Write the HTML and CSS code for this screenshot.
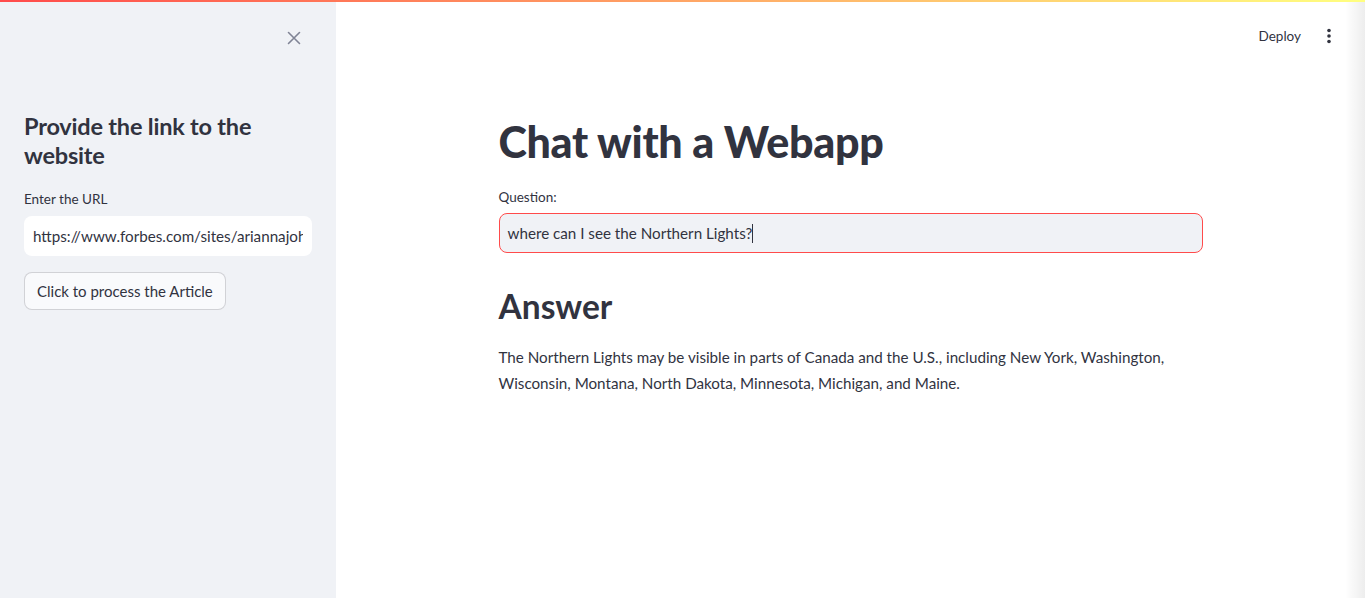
FILE: index.html
```html
<!DOCTYPE html>
<html lang="en">
<head>
<meta charset="utf-8">
<title>Chat with a Webapp</title>
<link rel="stylesheet" href="styles.css">
</head>
<body>
<div class="decoration"></div>
<div class="app">
  <aside class="sidebar">
    <div class="sidebar-top">
      <button class="close-btn" aria-label="Close sidebar">
        <svg width="14" height="14" viewBox="0 0 14 14"><path d="M1.5 1.5 L12.5 12.5 M12.5 1.5 L1.5 12.5" stroke="#808495" stroke-width="1.6" stroke-linecap="round"/></svg>
      </button>
    </div>
    <div class="sidebar-body">
      <h2 class="side-title">Provide the link to the website</h2>
      <label class="field-label">Enter the URL</label>
      <div class="url-input"><span class="url-text">https://www.forbes.com/sites/ariannajohnson/</span></div>
      <button class="process-btn">Click to process the Article</button>
    </div>
  </aside>
  <main class="main">
    <header class="topbar">
      <span class="deploy">Deploy</span>
      <span class="menu">
        <svg width="4" height="16" viewBox="0 0 4 16"><circle cx="2" cy="2.5" r="1.8" fill="#31333f"/><circle cx="2" cy="8" r="1.8" fill="#31333f"/><circle cx="2" cy="13.5" r="1.8" fill="#31333f"/></svg>
      </span>
    </header>
    <section class="content">
      <h1 class="title">Chat with a Webapp</h1>
      <label class="field-label q-label">Question:</label>
      <div class="question-input">where can I see the Northern Lights?<span class="caret"></span></div>
      <h2 class="answer-title">Answer</h2>
      <p class="answer">The Northern Lights may be visible in parts of Canada and the U.S., including New York, Washington, Wisconsin, Montana, North Dakota, Minnesota, Michigan, and Maine.</p>
    </section>
    <div class="edge-shadow"></div>
  </main>
</div>
</body>
</html>
```

FILE: styles.css
```css
* { box-sizing: border-box; }
html, body {
  margin: 0;
  padding: 0;
  height: 100%;
  overflow: hidden;
}
body {
  font-family: "Lato", "Liberation Sans", sans-serif;
  color: #31333f;
  background: #ffffff;
}
.decoration {
  height: 2px;
  background: linear-gradient(90deg, #ff4b4b, #ffff80);
}
.app {
  display: flex;
  height: 596px;
}
.sidebar {
  width: 336px;
  flex: 0 0 336px;
  background: #f0f2f6;
  display: flex;
  flex-direction: column;
}
.sidebar-top {
  display: flex;
  justify-content: flex-end;
  padding: 29px 35px 0 0;
  height: 60px;
}
.close-btn {
  border: 0;
  background: transparent;
  padding: 0;
  width: 14px;
  height: 14px;
  display: flex;
}
.sidebar-body {
  padding: 50px 24px 0 24px;
  display: flex;
  flex-direction: column;
}
.side-title {
  font-size: 23.5px;
  font-weight: 700;
  line-height: 29px;
  margin: 0 0 20px 0;
  letter-spacing: -0.2px;
}
.field-label {
  font-size: 13.5px;
  line-height: 18px;
  display: block;
  margin-bottom: 8px;
}
.url-input {
  height: 40px;
  width: 288px;
  background: #ffffff;
  border-radius: 8px;
  padding: 0 9px;
  font-size: 15.2px;
  line-height: 40px;
  white-space: nowrap;
  overflow: hidden;
}
.url-text {
  display: block;
  overflow: hidden;
}
.process-btn {
  margin-top: 16px;
  align-self: flex-start;
  height: 38px;
  padding: 0 12px;
  font-family: inherit;
  font-size: 15px;
  color: #31333f;
  background: #f9fafc;
  border: 1px solid rgba(49, 51, 63, 0.2);
  border-radius: 8px;
}
.main {
  flex: 1;
  display: flex;
  flex-direction: column;
  position: relative;
}
.topbar {
  height: 58px;
  display: flex;
  align-items: center;
  justify-content: flex-end;
  padding-right: 34px;
  padding-top: 10px;
}
.deploy {
  font-size: 13.5px;
  margin-right: 26px;
}
.menu {
  display: flex;
  align-items: center;
}
.content {
  width: 704px;
  margin: 0 auto;
}
.title {
  font-size: 43px;
  font-weight: 900;
  line-height: 52px;
  margin: 56px 0 20px 0;
  letter-spacing: -0.3px;
}
.q-label {
  margin-bottom: 7px;
}
.question-input {
  height: 40px;
  background: #f0f2f6;
  border: 1px solid #ff4b4b;
  border-radius: 8px;
  padding: 0 8px;
  font-size: 15.2px;
  line-height: 38px;
}
.caret {
  display: inline-block;
  width: 1px;
  height: 19px;
  background: #31333f;
  vertical-align: -4px;
}
.answer-title {
  font-size: 33.5px;
  font-weight: 700;
  line-height: 44px;
  margin: 31px 0 16px 0;
}
.answer {
  font-size: 15.2px;
  line-height: 26px;
  margin: 0;
}
.edge-shadow {
  position: absolute;
  top: 0;
  right: 0;
  bottom: 0;
  width: 20px;
  background: linear-gradient(90deg, rgba(0,0,0,0), rgba(0,0,0,0.07));
  pointer-events: none;
}
```
